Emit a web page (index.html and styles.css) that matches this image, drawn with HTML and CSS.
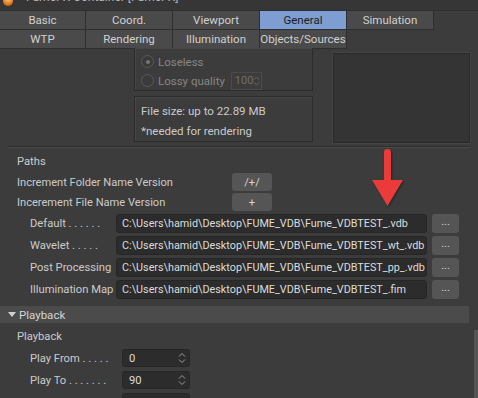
FILE: index.html
```html
<!DOCTYPE html>
<html>
<head>
<meta charset="utf-8">
<link rel="stylesheet" href="styles.css">
</head>
<body>
<div class="app">
  <div class="titlebar">
    <span class="ticon"></span>
    <span class="ttext">FumeFX Container [FumeFX]</span>
  </div>
  <div class="tabs">
    <div class="tab">Basic</div>
    <div class="tab">Coord.</div>
    <div class="tab">Viewport</div>
    <div class="tab active">General</div>
    <div class="tab">Simulation</div>
    <div class="tab">WTP</div>
    <div class="tab">Rendering</div>
    <div class="tab">Illumination</div>
    <div class="tab">Objects/Sources</div>
  </div>
  <div class="content">
    <div class="top">
      <div class="boxes">
        <div class="box box1">
          <div class="radio-row"><span class="radio on"></span><span class="dim">Loseless</span></div>
          <div class="radio-row"><span class="radio"></span><span class="dim">Lossy quality</span><span class="spin">100<span class="sarr"><svg width="7" height="12" viewBox="0 0 7 12"><path d="M1 4.5 L3.5 2 L6 4.5 M1 7.5 L3.5 10 L6 7.5" fill="none" stroke="#6a6a6a" stroke-width="1"/></svg></span></span></div>
        </div>
        <div class="box box2">
          <div class="line">File size: up to 22.89 MB</div>
          <div class="line">*needed for rendering</div>
        </div>
      </div>
      <div class="preview"></div>
    </div>
    <div class="sep"></div>
    <div class="sub">Paths</div>
    <div class="incrow"><span class="inclabel">Increment Folder Name Version</span><span class="btn wide">/+/</span></div>
    <div class="incrow"><span class="inclabel">Incerement File Name Version</span><span class="btn wide">+</span></div>
    <div class="prow"><span class="plabel">Default . . . . . .</span><span class="path">C:\Users\hamid\Desktop\FUME_VDB\Fume_VDBTEST_.vdb</span><span class="btn dots">...</span></div>
    <div class="prow"><span class="plabel">Wavelet . . . . .</span><span class="path">C:\Users\hamid\Desktop\FUME_VDB\Fume_VDBTEST_wt_.vdb</span><span class="btn dots">...</span></div>
    <div class="prow"><span class="plabel">Post Processing</span><span class="path">C:\Users\hamid\Desktop\FUME_VDB\Fume_VDBTEST_pp_.vdb</span><span class="btn dots">...</span></div>
    <div class="prow"><span class="plabel">Illumination Map</span><span class="path">C:\Users\hamid\Desktop\FUME_VDB\Fume_VDBTEST_.fim</span><span class="btn dots">...</span></div>
    <div class="section"><span class="tri"></span>Playback</div>
    <div class="sub sub2">Playback</div>
    <div class="nrow"><span class="nlabel">Play From . . . . .</span><span class="num">0<span class="narr"><svg width="8" height="12" viewBox="0 0 8 12"><path d="M1 4.5 L4 1.5 L7 4.5 M1 7.5 L4 10.5 L7 7.5" fill="none" stroke="#9a9a9a" stroke-width="1"/></svg></span></span></div>
    <div class="nrow"><span class="nlabel">Play To . . . . . . .</span><span class="num">90<span class="narr"><svg width="8" height="12" viewBox="0 0 8 12"><path d="M1 4.5 L4 1.5 L7 4.5 M1 7.5 L4 10.5 L7 7.5" fill="none" stroke="#9a9a9a" stroke-width="1"/></svg></span></span></div>
    <div class="nrow"><span class="nlabel">Start Frame . . .</span><span class="num">0</span></div>
  </div>
  <div class="scroll"></div>
  <svg class="arrow" width="34" height="62" viewBox="0 0 34 62">
    <path d="M12 4 Q12 1 15.5 1 Q19 1 19 4 L19 32 L31 32 L15.5 58 L0 32 L12 32 Z" fill="#ea3b3b"/>
  </svg>
</div>
</body>
</html>
```
FILE: styles.css
```css
* { box-sizing: border-box; }
html, body { margin: 0; padding: 0; }
body {
  width: 478px; height: 398px; overflow: hidden;
  background: #3c3c3c;
  font-family: Roboto, "Liberation Sans", sans-serif;
  font-size: 11px;
  color: #cbcbcb;
}
.app { position: relative; width: 478px; height: 398px; overflow: hidden; }
.titlebar {
  height: 11px; background: #363636; overflow: hidden;
  display: flex; align-items: flex-start; padding-left: 3px;
  border-bottom: 1px solid #2e2e2e;
}
.ticon {
  width: 10px; height: 10px; border-radius: 50%;
  background: radial-gradient(circle at 50% 30%, #ffcf80, #d86a10 70%);
  margin-top: -4px; flex: none;
}
.ttext { margin-left: 13px; line-height: 14px; margin-top: -10px; color: #b5b5b5; font-size: 12px; }
.tabs {
  display: grid;
  grid-template-columns: 86px 87px 87px 87px 87px;
  grid-auto-rows: 19px;
  width: 434px;
}
.tab {
  background: #4a4a4a; color: #d0d0d0;
  display: flex; align-items: center; justify-content: center;
  border-right: 1px solid #2f2f2f; border-bottom: 1px solid #2f2f2f;
  font-size: 11.5px;
}
.tab.active { background: #7d9dd3; color: #1c1c1c; }
.content { padding-left: 0; }
.top { display: flex; height: 94px; margin-top: -1px; }
.boxes { margin-left: 134px; width: 179px; display: flex; flex-direction: column; }
.box { border: 1px solid #2c2c2c; box-shadow: 1px 1px 0 #474747 inset; }
.box1 { height: 44px; border-top: none; padding: 4px 0 0 6px; }
.radio-row { display: flex; align-items: center; height: 19px; }
.radio {
  width: 13px; height: 13px; border-radius: 50%;
  border: 1px solid #5a5a5a; background: #3a3a3a; margin-right: 4px; position: relative;
}
.radio.on::after {
  content: ""; position: absolute; left: 3.5px; top: 3.5px; width: 4px; height: 4px;
  border-radius: 50%; background: #777;
}
.dim { color: #868686; font-size: 11.5px; }
.spin {
  margin-left: 6px; width: 31px; height: 18px; border: 1px solid #4a4a4a;
  color: #6e6e6e; display: flex; align-items: center; padding-left: 3px; position: relative;
}
.sarr { position: absolute; right: 1px; top: 2px; display: flex; }
.box2 { height: 46px; margin-top: 5px; padding: 4px 0 0 6px; }
.line { height: 20px; line-height: 20px; font-size: 11.5px; }
.preview {
  margin-left: 20px; margin-top: 5px; width: 137px; height: 90px;
  background: #343434; border: 1px solid #2a2a2a; box-shadow: 0 0 0 1px #444;
}
.sep { height: 2px; margin: 4px 8px 0 8px; border-top: 1px solid #2d2d2d; border-bottom: 1px solid #4a4a4a; width: 462px; }
.sub { padding-left: 17px; height: 20px; line-height: 20px; margin-top: 4px; font-size: 11.2px; }
.incrow { display: flex; align-items: center; height: 20px; padding-left: 17px; font-size: 11.1px; }
.inclabel { width: 215px; }
.btn {
  background: #555; border-radius: 3px; color: #d5d5d5;
  display: flex; align-items: center; justify-content: center;
}
.btn.wide { width: 40px; height: 18px; }
.prow { display: flex; align-items: center; height: 22px; padding-left: 30px; }
.plabel { width: 86px; white-space: nowrap; overflow: hidden; font-size: 11.2px; }
.path {
  width: 311px; height: 19px; background: #2c2c2c; border-radius: 3px;
  border: 1px solid #262626; color: #dcdcdc; padding-left: 5px;
  display: flex; align-items: center; font-size: 10.8px; white-space: nowrap; overflow: hidden;
}
.btn.dots { width: 27px; height: 19px; margin-left: 5px; line-height: 10px; align-items: flex-start; padding-top: 3px; }
.section {
  margin-top: 6px; height: 17px; width: 469px; background: #4b4b4b;
  display: flex; align-items: center; padding-left: 8px; color: #d5d5d5; font-size: 11.5px;
}
.tri {
  width: 0; height: 0; border-left: 4px solid transparent; border-right: 4px solid transparent;
  border-top: 5px solid #d0d0d0; margin-right: 3px;
}
.sub2 { margin-top: 4px; }
.nrow { display: flex; align-items: center; height: 22px; padding-left: 30px; font-size: 11.2px; }
.nlabel { width: 92px; white-space: nowrap; }
.num {
  width: 68px; height: 18px; background: #2c2c2c; border: 1px solid #262626; border-radius: 3px;
  display: flex; align-items: center; padding-left: 6px; color: #dcdcdc; position: relative;
}
.narr { position: absolute; right: 3px; top: 2px; display: flex; }
.scroll { position: absolute; right: 0; top: 330px; width: 4px; height: 68px; background: #555; }
.arrow { position: absolute; left: 372px; top: 148px; filter: drop-shadow(1px 1px 1px rgba(0,0,0,0.4)); }
```
